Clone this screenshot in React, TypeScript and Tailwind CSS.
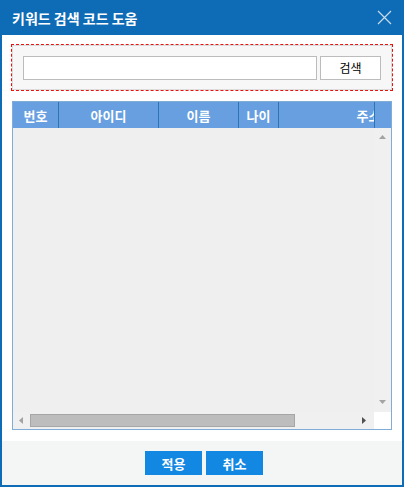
import React from "react";

const COLUMNS = [
  { label: "번호", width: "w-[46px]" },
  { label: "아이디", width: "w-[100px]" },
  { label: "이름", width: "w-[80px]" },
  { label: "나이", width: "w-[40px]" },
  { label: "주소", width: "w-[180px]" },
];

export default function App() {
  return (
    <div className="w-[404px] h-[487px] bg-[#0e6bb5] flex flex-col px-[2px] pb-[2px] font-['Noto_Sans_CJK_KR','Noto_Sans',sans-serif] select-none">
      {/* title bar */}
      <div className="h-[35px] shrink-0 flex items-center justify-between pl-[10px] pr-[10px]">
        <span className="text-white text-[14px] font-bold leading-none">키워드 검색 코드 도움</span>
        <svg width="15" height="15" viewBox="0 0 15 15" className="mt-[-1px]">
          <path d="M1 1 L14 14 M14 1 L1 14" stroke="#c9dcef" strokeWidth="1.2" fill="none" />
        </svg>
      </div>

      <div className="flex-1 bg-white flex flex-col">
        {/* search box */}
        <div className="mt-[9px] mx-[9px] border border-dashed border-[#e8120f]">
          <div className="border border-[#dcdcdc] bg-[#f7f7f7] pt-[10px] pb-[9px] px-[10px] flex gap-[3px]">
            <input className="flex-1 h-[24px] border border-[#bcbcbc] bg-white outline-none px-1 text-[12px]" />
            <button className="w-[61px] h-[24px] border border-[#bcbcbc] bg-white text-[12px] text-black leading-none">
              검색
            </button>
          </div>
        </div>

        {/* grid */}
        <div className="mt-[10px] mx-[10px] h-[329px] border border-[#80acd6] flex flex-col">
          <div className="h-[26px] shrink-0 flex bg-[#689fe0]">
            <div className="w-[361px] overflow-hidden flex">
              {COLUMNS.map((c) => (
                <div
                  key={c.label}
                  className={`${c.width} shrink-0 h-full border-r border-[#2c74b4] flex items-center justify-center text-white text-[13px] font-bold leading-none`}
                >
                  {c.label}
                </div>
              ))}
            </div>
            <div className="flex-1 border-l border-[#2c74b4]" />
          </div>

          <div className="flex-1 flex min-h-0">
            <div className="flex-1 bg-[#efefef]" />
            <div className="w-[17px] bg-[#f0f0f0] flex flex-col items-center justify-between pt-[7px] pb-[8px]">
              <svg width="7" height="4" viewBox="0 0 7 4">
                <path d="M3.5 0 L7 4 L0 4 Z" fill="#a3a3a3" />
              </svg>
              <svg width="7" height="4" viewBox="0 0 7 4">
                <path d="M0 0 L7 0 L3.5 4 Z" fill="#a3a3a3" />
              </svg>
            </div>
          </div>

          <div className="h-[17px] shrink-0 flex">
            <div className="flex-1 bg-[#f0f0f0] flex items-center pl-[6px] pr-[8px]">
              <svg width="4" height="7" viewBox="0 0 4 7">
                <path d="M4 0 L4 7 L0 3.5 Z" fill="#a3a3a3" />
              </svg>
              <div className="ml-[7px] w-[265px] h-[13px] bg-[#bdbdbd] border border-[#a6a6a6]" />
              <div className="flex-1" />
              <svg width="4" height="7" viewBox="0 0 4 7">
                <path d="M0 0 L4 3.5 L0 7 Z" fill="#505050" />
              </svg>
            </div>
            <div className="w-[17px] bg-white" />
          </div>
        </div>

        <div className="h-[11px]" />

        {/* footer */}
        <div className="flex-1 bg-[#f4f5f5] flex items-center justify-center gap-[4px] pl-[4px]">
          <button className="w-[57px] h-[24px] bg-[#1288e3] text-white text-[13px] font-bold leading-none">적용</button>
          <button className="w-[57px] h-[24px] bg-[#1288e3] text-white text-[13px] font-bold leading-none">취소</button>
        </div>
      </div>
    </div>
  );
}
